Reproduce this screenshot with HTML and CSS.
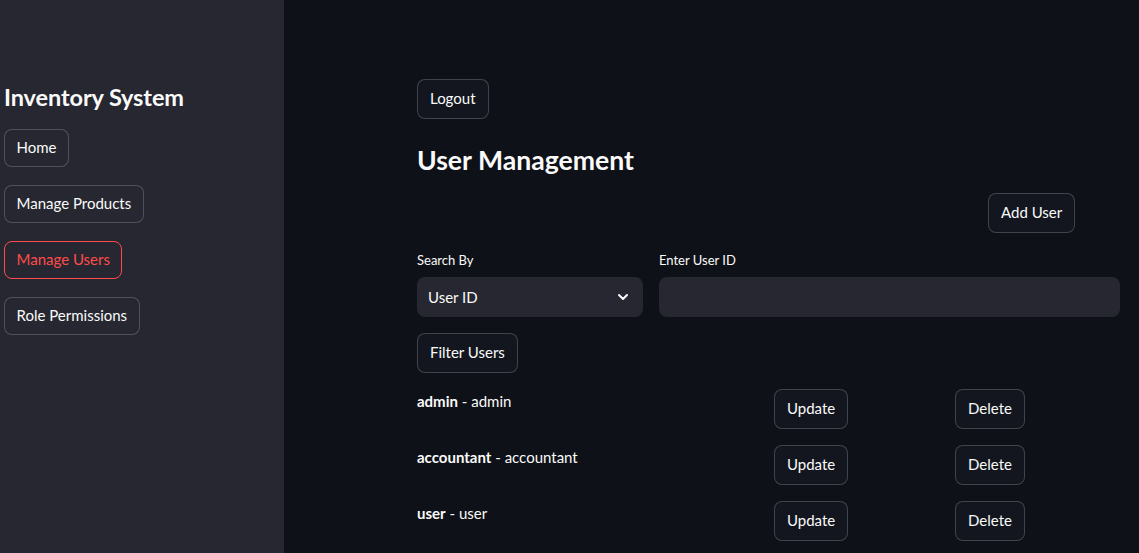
FILE: index.html
```html
<!DOCTYPE html>
<html>
<head>
<meta charset="utf-8">
<link rel="stylesheet" href="styles.css">
</head>
<body>
<div class="app">
  <aside class="sidebar">
    <h2 class="side-title">Inventory System</h2>
    <nav class="side-nav">
      <button class="btn side-btn">Home</button>
      <button class="btn side-btn">Manage Products</button>
      <button class="btn side-btn active">Manage Users</button>
      <button class="btn side-btn">Role Permissions</button>
    </nav>
  </aside>
  <main class="main">
    <div class="content">
      <div><button class="btn">Logout</button></div>
      <h1 class="page-title">User Management</h1>
      <div class="add-row">
        <div></div>
        <div><button class="btn">Add User</button></div>
      </div>
      <div class="search-row">
        <div class="field">
          <label class="label">Search By</label>
          <div class="select">
            <span>User ID</span>
            <svg class="chev" width="14" height="14" viewBox="0 0 14 14"><path d="M3 5l4 4 4-4" fill="none" stroke="#fafafa" stroke-width="2" stroke-linecap="round" stroke-linejoin="round"/></svg>
          </div>
        </div>
        <div class="field">
          <label class="label">Enter User ID</label>
          <div class="input"></div>
        </div>
      </div>
      <div><button class="btn">Filter Users</button></div>
      <div class="user-row">
        <div class="user-text"><b>admin</b> - admin</div>
        <div><button class="btn">Update</button></div>
        <div><button class="btn">Delete</button></div>
      </div>
      <div class="user-row">
        <div class="user-text"><b>accountant</b> - accountant</div>
        <div><button class="btn">Update</button></div>
        <div><button class="btn">Delete</button></div>
      </div>
      <div class="user-row">
        <div class="user-text"><b>user</b> - user</div>
        <div><button class="btn">Update</button></div>
        <div><button class="btn">Delete</button></div>
      </div>
    </div>
  </main>
</div>
</body>
</html>
```
FILE: styles.css
```css
* { box-sizing: border-box; }
html, body {
  margin: 0;
  height: 100%;
  background: #0e1117;
  color: #fafafa;
  font-family: "Lato", "Noto Sans", sans-serif;
  overflow: hidden;
}
.app {
  display: flex;
  height: 553px;
}
.sidebar {
  width: 284px;
  flex: none;
  background: #262730;
  padding: 82px 0 0 4px;
}
.side-title {
  margin: 0 0 17px 0;
  font-size: 23.5px;
  line-height: 30px;
  font-weight: 700;
  letter-spacing: -0.1px;
}
.side-nav {
  display: flex;
  flex-direction: column;
  align-items: flex-start;
  gap: 18px;
}
.btn {
  font-family: inherit;
  font-size: 15px;
  color: #fafafa;
  background: #13161e;
  border: 1px solid rgba(250, 250, 250, 0.2);
  border-radius: 8px;
  height: 40px;
  padding: 0 12px 1px;
  cursor: pointer;
  line-height: 1;
}
.side-btn {
  height: 38px;
  background: #262730;
  padding: 0 11.5px 1px;
}
.side-btn.active {
  color: #ff4b4b;
  border-color: #ff4b4b;
}
.main {
  flex: 1;
  padding: 79px 0 0 133px;
}
.content {
  width: 703px;
  display: flex;
  flex-direction: column;
  gap: 16px;
}
.page-title {
  margin: 0;
  padding-top: 8px;
  font-size: 26.6px;
  line-height: 34px;
  font-weight: 700;
}
.add-row {
  display: grid;
  grid-template-columns: 1fr 132px;
  gap: 16px;
}
.search-row {
  display: grid;
  grid-template-columns: 226px 1fr;
  gap: 16px;
}
.field {
  display: flex;
  flex-direction: column;
}
.label {
  font-size: 13px;
  line-height: 22px;
  height: 28px;
}
.select {
  height: 40px;
  background: #262730;
  border-radius: 8px;
  display: flex;
  align-items: center;
  justify-content: space-between;
  padding: 0 13px 0 11px;
  font-size: 15px;
}
.chev { display: block; }
.input {
  height: 40px;
  background: #262730;
  border-radius: 8px;
}
.user-row {
  display: grid;
  grid-template-columns: 341px 165px 165px;
  gap: 16px;
}
.user-text {
  font-size: 15px;
  line-height: 24px;
}
.user-text b { font-weight: 700; }
```
